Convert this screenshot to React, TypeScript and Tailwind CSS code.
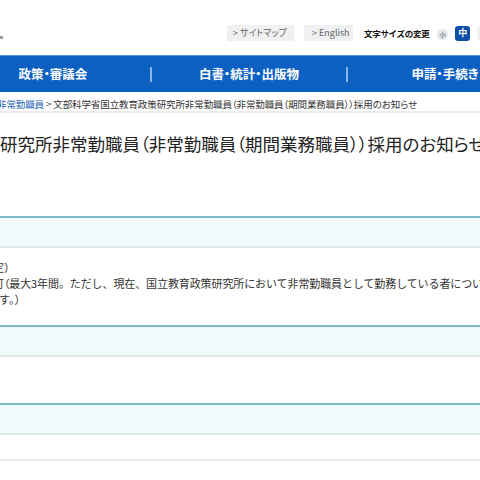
export default function App() {
  const jp = "font-['Noto_Sans_CJK_JP','Noto_Sans',sans-serif]";
  return (
    <div className={`w-[480px] h-[480px] overflow-hidden bg-white text-[#333] ${jp}`}>
      {/* header */}
      <div className="h-[55px] flex items-start overflow-hidden">
        <div className="w-[3px] h-[3px] bg-[#9aa0a6] mt-[36px] shrink-0" />
        <div className="ml-[224px] mt-[25px] flex items-center shrink-0">
          <div className="w-[67px] h-[16px] bg-[#eef0f2] text-[#666] text-[9px] leading-[16px] pl-[6px] whitespace-nowrap shrink-0 [font-feature-settings:'palt']">
            &gt; サイトマップ
          </div>
          <div className="ml-[10px] w-[49px] h-[16px] bg-[#eef0f2] text-[#666] text-[9px] leading-[16px] pl-[8px] whitespace-nowrap shrink-0">
            &gt; English
          </div>
          <div className="ml-[11px] text-[8.5px] font-bold text-[#111] whitespace-nowrap shrink-0 tracking-[-0.3px]">
            文字サイズの変更
          </div>
          <div className="ml-[8px] mt-[2px] w-[11px] h-[11px] rounded-full bg-[#e1e8ee] text-[6px] text-[#333] flex items-center justify-center shrink-0">
            小
          </div>
          <div className="ml-[7px] w-[15px] h-[15px] rounded-[3px] bg-[#0c4fa8] text-white text-[9px] font-bold flex items-center justify-center shrink-0">
            中
          </div>
          <div className="ml-[7px] w-[15px] h-[15px] rounded-[3px] bg-[#eef0f2] text-[#333] text-[9px] flex items-center justify-center shrink-0">
            大
          </div>
        </div>
      </div>

      {/* nav */}
      <nav className="h-[37px] bg-[#0b60c2] border-t border-[#4f8fd8] flex items-center overflow-hidden">
        <div className="-ml-[44px] flex items-center shrink-0">
          <div className="w-[194px] flex items-center justify-center text-white font-bold text-[12.5px] shrink-0 [font-feature-settings:'palt']">
            政策・審議会
          </div>
          <div className="w-[2px] h-[15px] bg-[#8cb4e4] shrink-0" />
          <div className="w-[194px] flex items-center justify-center text-white font-bold text-[12.5px] shrink-0 [font-feature-settings:'palt']">
            白書・統計・出版物
          </div>
          <div className="w-[2px] h-[15px] bg-[#8cb4e4] shrink-0" />
          <div className="w-[194px] flex items-center justify-center text-white font-bold text-[12.5px] shrink-0 [font-feature-settings:'palt']">
            申請・手続き
          </div>
        </div>
      </nav>

      {/* breadcrumb */}
      <div className="h-[21px] border-b-2 border-[#ececec] pt-[6px] overflow-hidden">
        <div className="-ml-[3px] text-[9.5px] leading-[12px] whitespace-nowrap tracking-[-0.1px] [font-feature-settings:'palt']">
          <span className="text-[#1a5fb4]">非常勤職員</span>
          <span className="text-[#555]"> &gt; </span>
          <span className="text-[#333]">文部科学省国立教育政策研究所非常勤職員（非常勤職員（期間業務職員））採用のお知らせ</span>
        </div>
      </div>

      {/* title */}
      <h1 className="mt-[19px] text-[17.5px] leading-[24px] whitespace-nowrap text-[#222] overflow-hidden [font-feature-settings:'palt']">
        研究所非常勤職員（非常勤職員（期間業務職員））採用のお知らせ
      </h1>

      {/* table */}
      <div className="mt-[60px]">
        <div className="h-[32px] border-t-2 border-b-2 border-t-[#7fbccb] border-b-[#e2e9eb] bg-[#f2f9fb]" />
        <div className="h-[77px] pt-[11px] overflow-hidden text-[11px] leading-[16px] text-[#333]">
          <div className="-ml-[7px] whitespace-nowrap">定）</div>
          <div className="-ml-[7px] whitespace-nowrap tracking-[-0.1px]">
            <span className="[font-feature-settings:'palt']">可（</span>最大3年間。ただし、現在、国立教育政策研究所において非常勤職員として勤務している者については、
          </div>
          <div className="-ml-[1px] whitespace-nowrap">す。）</div>
        </div>
        <div className="h-[32px] border-t-2 border-b-2 border-t-[#7fbccb] border-b-[#e2e9eb] bg-[#f2f9fb]" />
        <div className="h-[46px]" />
        <div className="h-[32px] border-t-2 border-b-2 border-t-[#7fbccb] border-b-[#e2e9eb] bg-[#f2f9fb]" />
        <div className="h-[26px] pt-[8px] border-b-2 border-[#e8e8e8] overflow-hidden text-[11px] leading-[16px]">
          <div className="-ml-[6px] whitespace-nowrap">）</div>
        </div>
      </div>
    </div>
  );
}
